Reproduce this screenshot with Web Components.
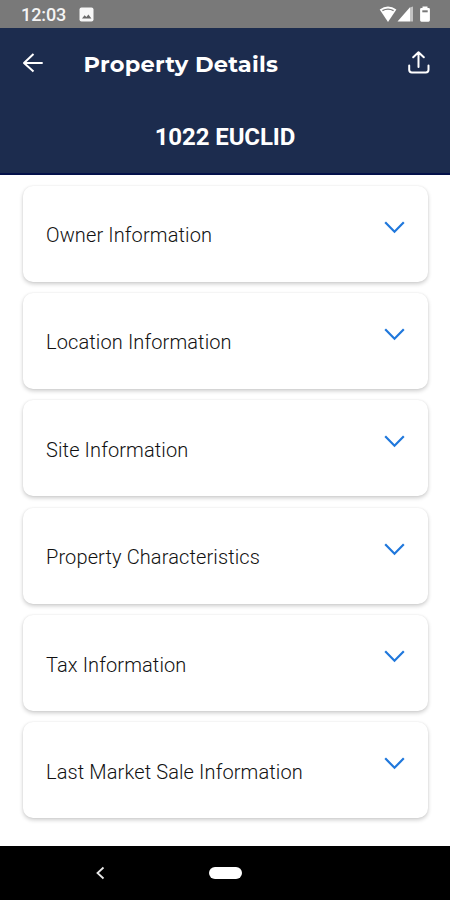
<!DOCTYPE html>
<html lang="en">
<head>
<meta charset="utf-8">
<title>Property Details</title>
<style>
html, body { margin: 0; height: 100%; background: #fff; }
body { font-family: Roboto, "Noto Sans", sans-serif; overflow: hidden; }
</style>
</head>
<body>
<property-screen>
  <status-bar slot="status">12:03</status-bar>
  <app-header slot="header">Property Details<span slot="address">1022 EUCLID</span></app-header>
  <detail-card>Owner Information</detail-card>
  <detail-card>Location Information</detail-card>
  <detail-card>Site Information</detail-card>
  <detail-card>Property Characteristics</detail-card>
  <detail-card>Tax Information</detail-card>
  <detail-card>Last Market Sale Information</detail-card>
  <nav-bar slot="nav"></nav-bar>
</property-screen>
<script>
function define(name, html) {
  const template = document.createElement('template');
  template.innerHTML = html;
  customElements.define(name, class extends HTMLElement {
    constructor() {
      super();
      this.attachShadow({ mode: 'open' }).append(template.content.cloneNode(true));
    }
  });
}

define('property-screen', `
<style>
:host { display: flex; flex-direction: column; width: 450px; height: 900px; background: #fff; }
main { flex: 1; display: flex; flex-direction: column; gap: 11.4px; padding: 11px 22px 0 23px; }
</style>
<slot name="status"></slot><slot name="header"></slot>
<main><slot></slot></main>
<slot name="nav"></slot>`);

define('status-bar', `
<style>
:host { display: flex; box-sizing: border-box; height: 28px; padding: 0 20px 0 21px; align-items: center; background: #797979; color: #f4f4f4; }
.time { font: 500 18px/28px Roboto, sans-serif; letter-spacing: -.1px; width: 58px; padding-top: 1px; white-space: nowrap; }
svg { display: block; }
.icons { margin-left: auto; }
</style>
<span class="time"><slot></slot></span>
<svg width="15" height="28" viewBox="79 0 15 28"><rect x="79.5" y="7.5" width="14" height="14" rx="2" fill="#f7f7f7"/><path d="M82 18.5l2.6-3.2 1.8 1.8 2-2.6 3 4z" fill="#696969"/></svg>
<svg class="icons" width="51" height="28" viewBox="379 0 51 28">
<path d="M379.7 9.5Q388 3.6 396.4 9.5L388 22Z" fill="#fff"/>
<path d="M382.4 10.6Q388 7.6 393.6 10.6" fill="none" stroke="#777" stroke-width="1.2"/>
<path d="M397.5 21.5L410 7.2V21.5Z" fill="#fff"/><path d="M410 7.5L413 6.5V21.5H410Z" fill="#c4c4c4"/>
<path d="M422.5 6.5h5v1.5h1.2q1.2 0 1.2 1.2v11.1q0 1.4-1.4 1.4h-7q-1.4 0-1.4-1.4V9.2q0-1.2 1.2-1.2h1.2z" fill="#fff"/>
<path d="M422.3 11.3h5.4" stroke="#777" stroke-width="2"/>
</svg>`);

define('app-header', `
<style>
:host { display: block; height: 146.5px; box-sizing: border-box; background: #1c2c4e; color: #fff; border-bottom: 2px solid #03114a; }
.bar { display: flex; align-items: center; height: 70px; padding: 0 20px 0 22px; }
.title { flex: 1; margin-left: 39.5px; font: 700 22.5px/30px Montserrat, Inter, sans-serif; letter-spacing: .24px; white-space: nowrap; padding-top: 1px; }
.address { display: flex; justify-content: center; padding-top: 23px; font: 700 24px/32px Roboto, sans-serif; letter-spacing: -.1px; }
svg { display: block; fill: none; stroke: #fff; stroke-width: 2; stroke-linejoin: round; }
.title + svg { stroke-linecap: round; }
</style>
<div class="bar">
<svg width="22" height="22" viewBox="22 51.5 22 22"><path d="M42.7 62.5H23.5M33.5 53.5L24 62.5L33.5 71"/></svg>
<span class="title"><slot></slot></span>
<svg width="23" height="24" viewBox="407 51 23 24"><path d="M418.5 67V52.8M413.2 57.3L418.5 52.3L423.8 57.3M409.2 65.5V69.8Q409.2 72.5 411.9 72.5H425.8Q428.5 72.5 428.5 69.8V65.5"/></svg>
</div>
<div class="address"><slot name="address"></slot></div>`);

define('detail-card', `
<style>
:host { display: flex; box-sizing: border-box; height: 96px; flex: none; justify-content: space-between; padding: 0 23px; background: #fff; border-radius: 10px; box-shadow: 0 2px 4px rgba(0,0,0,.2), 0 0 2px rgba(0,0,0,.07); color: #111; }
.label { font: 300 20px/28px Roboto, sans-serif; letter-spacing: .12px; padding-top: 35.5px; white-space: nowrap; }
svg { display: block; margin-top: 34px; }
</style>
<span class="label"><slot></slot></span>
<svg width="21" height="14" viewBox="0 0 21 14"><path d="M1.2 2.3L10.5 11.8L19.8 2.3" fill="none" stroke="#2078dc" stroke-width="2.2"/></svg>`);

define('nav-bar', `
<style>
:host { display: flex; align-items: center; height: 54px; background: #000; }
svg { display: block; margin-left: 95px; }
.pill { margin-left: 104px; width: 33px; height: 12px; border-radius: 6px; background: #fff; }
</style>
<svg width="10" height="14" viewBox="0 0 10 14"><path d="M8.5 1.5L2.5 7L8.5 12.5" fill="none" stroke="#e8e8e8" stroke-width="1.8"/></svg>
<span class="pill"></span>`);
</script>
</body>
</html>
